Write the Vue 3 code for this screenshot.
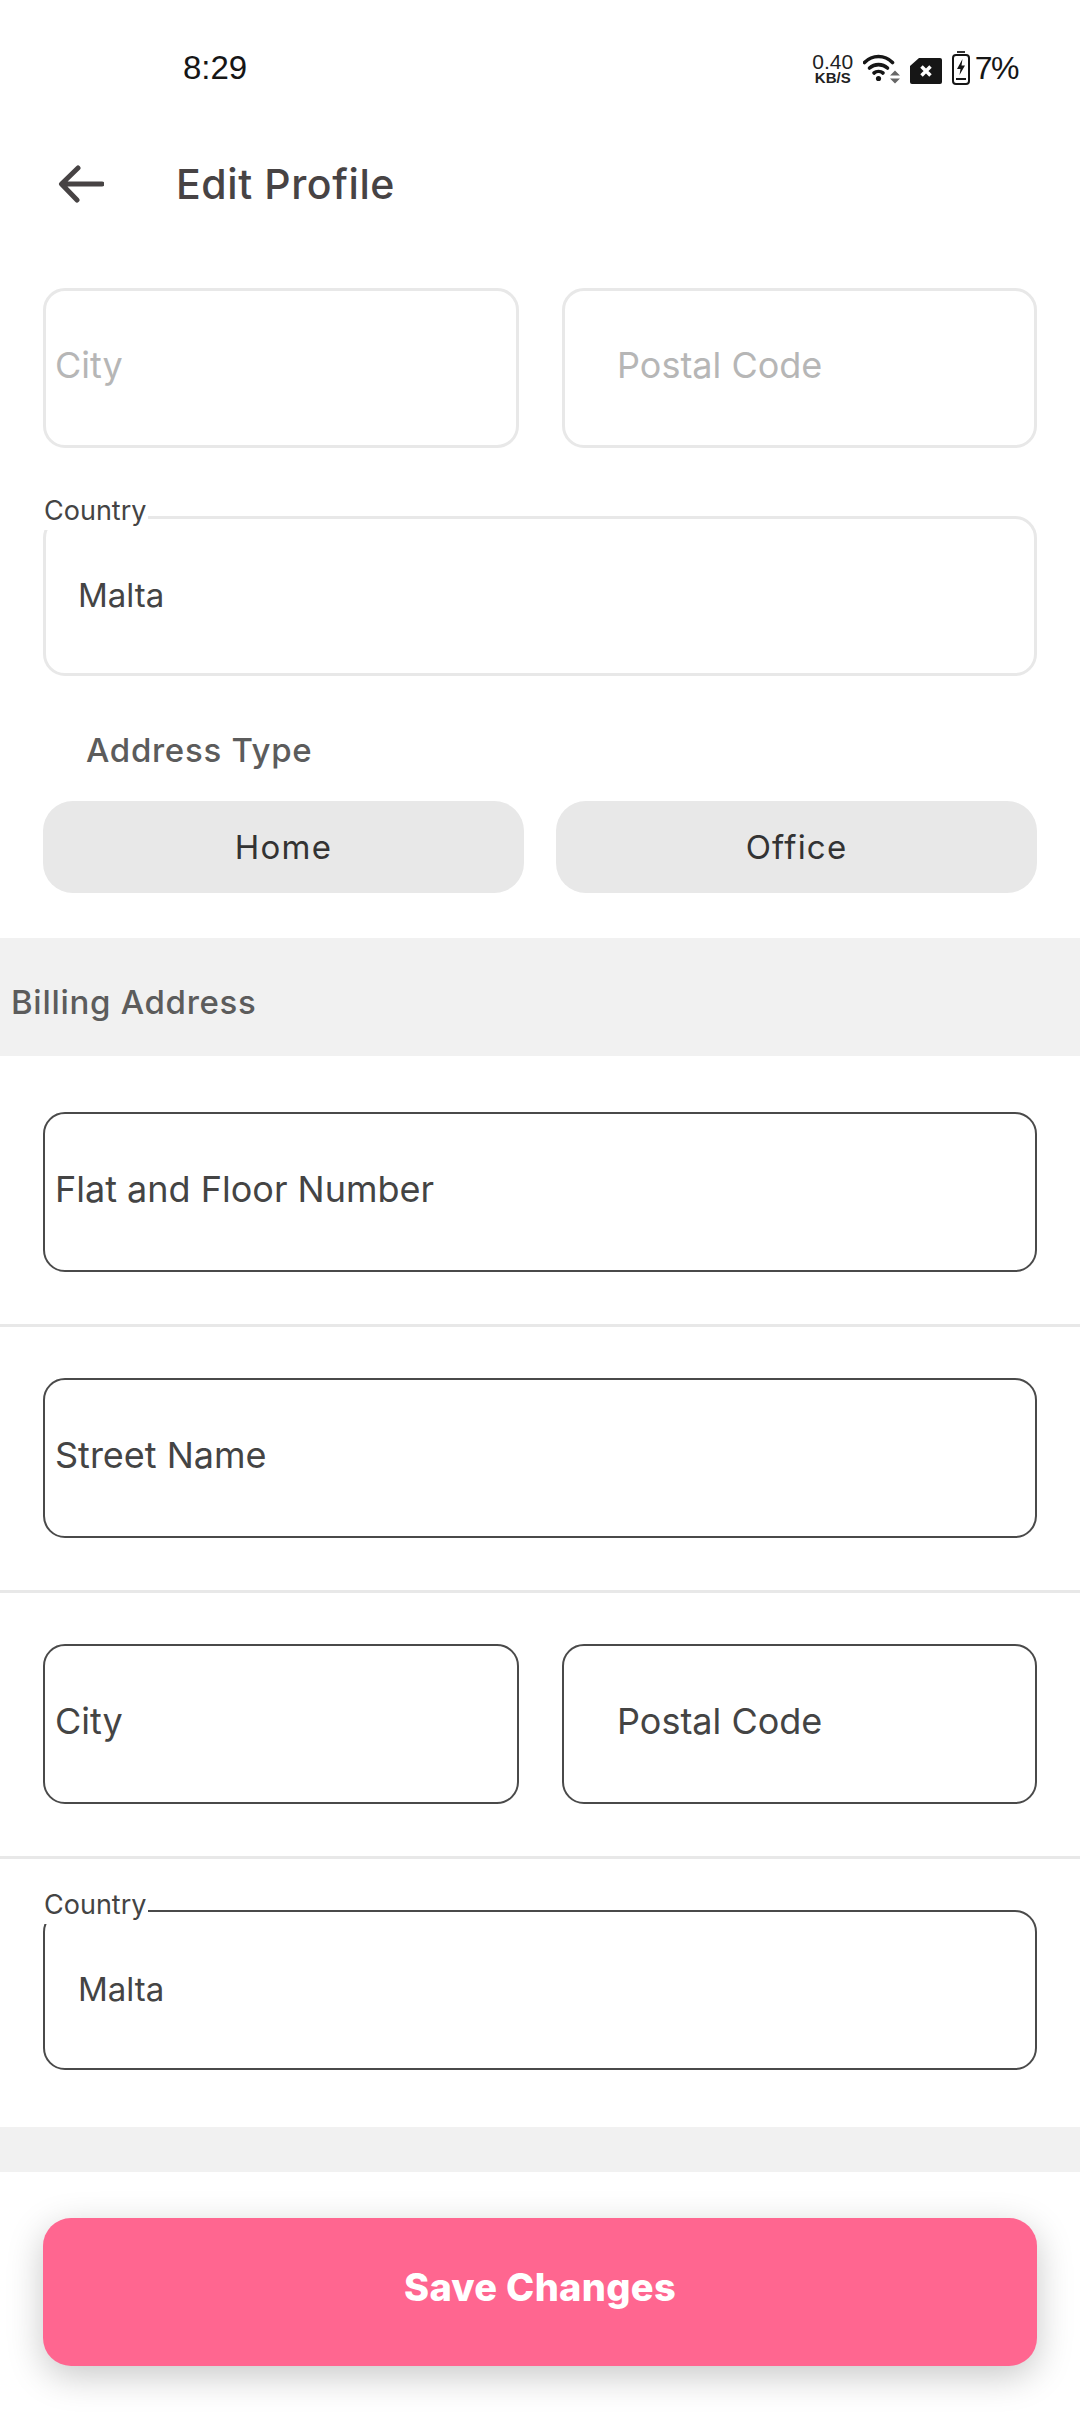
<script setup>
const addressTypes = ['Home', 'Office']
</script>

<template>
  <div class="screen">
    <div class="status-bar">
      <span class="clock">8:29</span>
      <div class="status-icons">
        <div class="speed"><span class="speed-num">0.40</span><span class="speed-unit">KB/S</span></div>
        <svg class="wifi" width="38" height="31" viewBox="0 0 38 31">
          <path d="M1.500 9.500C9.500 1.500 21.500 1.500 29.500 9.500" fill="none" stroke="#161616" stroke-width="3.600" stroke-linecap="round" />
          <path d="M6.500 15C11.500 10.500 19.500 10.500 24.500 15" fill="none" stroke="#161616" stroke-width="3.600" stroke-linecap="round" />
          <path d="M11 20C13.500 18 17.500 18 20 20" fill="none" stroke="#161616" stroke-width="3.600" stroke-linecap="round" />
          <circle cx="15.500" cy="25.500" r="2.600" fill="#161616" />
          <path d="M27 22.500L32 17.500L37 22.500ZM27 25.500H37L32 30.500Z" fill="#666" />
        </svg>
        <svg class="sim" width="32" height="26" viewBox="0 0 32 26">
          <path d="M9 0H30a2 2 0 0 1 2 2V24a2 2 0 0 1-2 2H2a2 2 0 0 1-2-2V8Z" fill="#161616" />
          <path d="M11.500 8.500L20.500 17.500M20.500 8.500L11.500 17.500" stroke="#fff" stroke-width="3.500" />
        </svg>
        <svg class="battery" width="18" height="34" viewBox="0 0 18 34">
          <rect x="5" y="0" width="8" height="2" fill="#333" />
          <rect x="1" y="4" width="16" height="29" rx="3" fill="none" stroke="#161616" stroke-width="2" />
          <path d="M10.500 8L5 18H8.500L7.500 24L13 14.500H9.500Z" fill="#161616" />
          <rect x="4" y="27" width="10" height="2" fill="#161616" />
        </svg>
        <span class="percent">7%</span>
      </div>
    </div>

    <header class="top-bar">
      <svg class="back" width="46" height="38" viewBox="0 0 46 38">
        <path d="M44 19H4M20 3L3.500 19L19 35" fill="none" stroke="#474344" stroke-width="5" stroke-linecap="round" stroke-linejoin="round" />
      </svg>
      <h1 class="title">Edit Profile</h1>
    </header>

    <section class="shipping">
      <div class="two-col">
        <div class="field soft"><span class="placeholder city">City</span></div>
        <div class="field soft"><span class="placeholder postal">Postal Code</span></div>
      </div>

      <div class="field soft country-field">
        <span class="floating">Country</span>
        <span class="value">Malta</span>
      </div>

      <div class="type-label">Address Type</div>
      <div class="type-row">
        <button v-for="t in addressTypes" :key="t" class="type-btn">{{ t }}</button>
      </div>
    </section>

    <div class="band"><span>Billing Address</span></div>

    <section class="billing">
      <div class="row first">
        <div class="field"><span class="placeholder city dark">Flat and Floor Number</span></div>
      </div>
      <div class="row">
        <div class="field"><span class="placeholder city dark">Street Name</span></div>
      </div>
      <div class="row two-col">
        <div class="field"><span class="placeholder city dark">City</span></div>
        <div class="field"><span class="placeholder postal dark">Postal Code</span></div>
      </div>
      <div class="row last">
        <div class="field">
          <span class="floating">Country</span>
          <span class="value">Malta</span>
        </div>
      </div>
    </section>

    <div class="band thin"></div>

    <div class="footer">
      <button class="save">Save Changes</button>
    </div>
  </div>
</template>

<style>
html,
body {
  margin: 0;
  background: #fff;
}
</style>

<style scoped>
.screen {
  width: 1080px;
  height: 2412px;
  overflow: hidden;
  background: #fff;
  font-family: Inter, "Liberation Sans", sans-serif;
  color: #444;
}

.status-bar {
  height: 87px;
  padding: 0 62px 0 183px;
  display: flex;
  align-items: flex-end;
  justify-content: space-between;
  box-sizing: border-box;
}

.clock {
  font-size: 33px;
  line-height: 38px;
  color: #161616;
  font-family: "Liberation Sans", sans-serif;
}

.status-icons {
  display: flex;
  align-items: center;
  height: 38px;
}

.speed {
  display: flex;
  flex-direction: column;
  align-items: center;
  width: 44px;
  color: #222;
  font-family: "Liberation Sans", sans-serif;
  margin-right: 8px;
}

.speed-num {
  font-size: 21px;
  line-height: 18px;
}

.speed-unit {
  font-size: 15px;
  line-height: 13px;
  font-weight: 700;
}

.wifi {
  margin-right: 9px;
}

.sim {
  margin: 6px 10px 0 0;
}

.battery {
  margin-right: 5px;
}

.percent {
  font-size: 32px;
  line-height: 38px;
  letter-spacing: -1.5px;
  color: #161616;
  font-family: "Liberation Sans", sans-serif;
}

.top-bar {
  height: 194px;
  padding-left: 58px;
  display: flex;
  align-items: center;
  box-sizing: border-box;
}

.title {
  margin: 0 0 0 72px;
  font-size: 41px;
  font-weight: 500;
  letter-spacing: 0.6px;
  color: #474344;
}

.shipping {
  padding: 7px 43px 45px;
}

.two-col {
  display: grid;
  grid-template-columns: 476px 475px;
  column-gap: 43px;
}

.field {
  position: relative;
  height: 160px;
  border: 2px solid #4a4a4a;
  border-radius: 22px;
  box-sizing: border-box;
  display: flex;
  align-items: center;
  background: #fff;
}

.field.soft {
  border: 3px solid #e8e8e8;
}

.placeholder {
  font-size: 36px;
  color: #b6b6b6;
  margin-top: -6px;
}

.placeholder.dark {
  color: #444;
}

.placeholder.city {
  margin-left: 9px;
}

.placeholder.postal {
  margin-left: 52px;
}

.placeholder.city.dark {
  margin-left: 10px;
}

.placeholder.postal.dark {
  margin-left: 53px;
}

.value {
  font-size: 33px;
  color: #444;
  margin-left: 33px;
  margin-top: -3px;
}

.soft .value {
  margin-left: 32px;
}

.floating {
  position: absolute;
  left: -2px;
  top: -26px;
  padding: 0 2px 0 1px;
  background: #fff;
  font-size: 27px;
  line-height: 38px;
  color: #444;
}

.soft .floating {
  left: -3px;
  top: -27px;
}

.country-field {
  margin-top: 68px;
}

.type-label {
  margin: 55px 0 0 43px;
  font-size: 33px;
  line-height: 38px;
  font-weight: 500;
  letter-spacing: 0.7px;
  color: #5c5c5c;
}

.type-row {
  margin-top: 32px;
  display: grid;
  grid-template-columns: 481px 481px;
  column-gap: 32px;
}

.type-btn {
  height: 92px;
  border: 0;
  border-radius: 30px;
  background: #e8e8e8;
  font-family: inherit;
  font-size: 33px;
  letter-spacing: 1.2px;
  color: #333;
}

.band {
  background: #f1f1f1;
  height: 118px;
  display: flex;
  align-items: center;
  padding-left: 11px;
  padding-top: 10px;
  box-sizing: border-box;
  font-size: 33px;
  font-weight: 500;
  letter-spacing: 0.7px;
  color: #5c5c5c;
}

.band.thin {
  height: 45px;
  padding: 0;
}

.row {
  padding: 51px 43px 52px;
  border-bottom: 3px solid #e8e8e8;
}

.row.first {
  padding-top: 56px;
}

.row.last {
  border-bottom: 0;
  padding-bottom: 57px;
}

.footer {
  padding: 46px 43px 0;
}

.save {
  width: 100%;
  height: 148px;
  padding: 0 0 10px;
  border: 0;
  border-radius: 28px;
  background: #ff6690;
  color: #fff;
  font-family: inherit;
  font-size: 38px;
  font-weight: 800;
  letter-spacing: 0.3px;
  box-shadow: 0 10px 36px rgba(0, 0, 0, 0.22);
}
</style>
